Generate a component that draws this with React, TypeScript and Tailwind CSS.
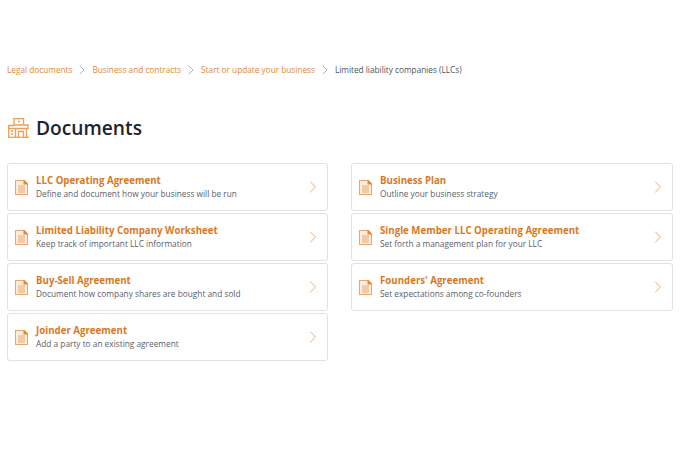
import { ChevronRight } from 'lucide-react';

interface Doc {
  title: string;
  description: string;
}

const leftDocs: Doc[] = [
  { title: 'LLC Operating Agreement', description: 'Define and document how your business will be run' },
  { title: 'Limited Liability Company Worksheet', description: 'Keep track of important LLC information' },
  { title: 'Buy-Sell Agreement', description: 'Document how company shares are bought and sold' },
  { title: 'Joinder Agreement', description: 'Add a party to an existing agreement' },
];

const rightDocs: Doc[] = [
  { title: 'Business Plan', description: 'Outline your business strategy' },
  { title: 'Single Member LLC Operating Agreement', description: 'Set forth a management plan for your LLC' },
  { title: "Founders' Agreement", description: 'Set expectations among co-founders' },
];

const crumbs = ['Legal documents', 'Business and contracts', 'Start or update your business'];

function DocIcon() {
  return (
    <svg width="13" height="15" viewBox="0 0 13 15" fill="none" stroke="#eba56a" strokeWidth="1.1" className="shrink-0">
      <path d="M0.5 0.5H9L12.5 4V14.5H0.5Z" fill="#fdeee0" />
      <path d="M9 0.5V4H12.5Z" fill="#e08a3c" stroke="#e08a3c" />
      <path d="M3 6H10M3 8H10M3 10H10M3 12H10" stroke="#eba56a" />
    </svg>
  );
}

function BuildingIcon() {
  return (
    <svg width="21" height="20" viewBox="0 0 21 20" fill="none" stroke="#ee9f58" strokeWidth="1.3" className="shrink-0">
      <path d="M6 7V0.7H15.5V6" />
      <path d="M10 3.5H12" />
      <path d="M0.7 19.3V7.5H6" />
      <path d="M0.7 10.5H20V7H6" />
      <path d="M7.5 19.3V10.5M18.5 19.3V10.5" />
      <path d="M3 13H5M3 16H5" />
      <path d="M10.5 19.3V13.5H15.5V19.3" />
      <path d="M0 19.3H21" />
    </svg>
  );
}

function DocCard({ doc }: { doc: Doc }) {
  return (
    <div className="h-[48px] flex items-center border border-[#dfe1e6] rounded-[3px] bg-white pl-[7px] pr-[4px]">
      <DocIcon />
      <div className="flex-1 ml-[8px] min-w-0">
        <p className="text-[9.7px] leading-[13px] font-bold text-[#d9791f]">{doc.title}</p>
        <p className="text-[8.3px] leading-[13px] text-[#5a606b]">{doc.description}</p>
      </div>
      <ChevronRight size={20} strokeWidth={1.2} className="text-[#efab70] shrink-0" />
    </div>
  );
}

export default function App() {
  return (
    <div className="w-[680px] h-[450px] bg-white overflow-hidden pl-[7px] pr-[7px] pt-[64px] font-['Open_Sans',sans-serif]">
      {/* Breadcrumbs */}
      <div className="flex items-center h-[12px] text-[8.25px] leading-[12px]">
        {crumbs.map((crumb) => (
          <div key={crumb} className="flex items-center">
            <span className="text-[#df8a35]">{crumb}</span>
            <ChevronRight size={16} strokeWidth={1.4} className="text-[#a9adb3] mx-[2px]" />
          </div>
        ))}
        <span className="text-[#4d5560]">Limited liability companies (LLCs)</span>
      </div>

      <div className="flex items-center mt-[41px] h-[22px]">
        <div className="ml-[1px]">
          <BuildingIcon />
        </div>
        <h1 className="ml-[7px] text-[19.2px] leading-[22px] font-semibold text-[#1d2330]">Documents</h1>
      </div>

      {/* Document columns */}
      <div className="grid grid-cols-[321px_322px] gap-x-[23px] mt-[24px]">
        <div className="flex flex-col gap-[2px]">
          {leftDocs.map((doc) => (
            <DocCard key={doc.title} doc={doc} />
          ))}
        </div>
        <div className="flex flex-col gap-[2px]">
          {rightDocs.map((doc) => (
            <DocCard key={doc.title} doc={doc} />
          ))}
        </div>
      </div>
    </div>
  );
}
